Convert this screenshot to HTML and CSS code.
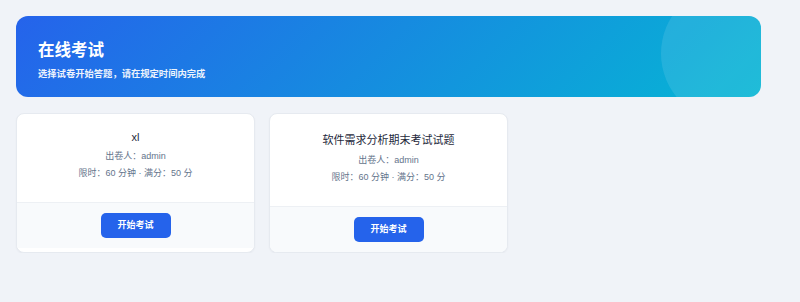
FILE: index.html
```html
<!DOCTYPE html>
<html lang="zh-CN">
<head>
    <meta charset="UTF-8">
    <meta name="viewport" content="width=device-width, initial-scale=1.0">
    <title>在线考试</title>
    <link rel="stylesheet" href="styles.css">
</head>
<body>
    <div class="wrap">
        <div class="banner">
            <h1>在线考试</h1>
            <p>选择试卷开始答题，请在规定时间内完成</p>
            <span class="circle"></span>
        </div>
        <div class="papers">
            <div class="paper">
                <div class="info">
                    <h2>xl</h2>
                    <p>出卷人：admin</p>
                    <p>限时：60 分钟 · 满分：50 分</p>
                </div>
                <div class="foot">
                    <a href="javascript:;" class="start">开始考试</a>
                </div>
            </div>
            <div class="paper">
                <div class="info">
                    <h2>软件需求分析期末考试试题</h2>
                    <p>出卷人：admin</p>
                    <p>限时：60 分钟 · 满分：50 分</p>
                </div>
                <div class="foot">
                    <a href="javascript:;" class="start">开始考试</a>
                </div>
            </div>
        </div>
    </div>
</body>
</html>
```

FILE: styles.css
```css
*{
    padding: 0;
    margin: 0;
    box-sizing: border-box;
}
body{
    background-color: #f0f3f8;
    font-family: "Liberation Sans", "Noto Sans CJK SC", sans-serif;
}
a{
    text-decoration: none;
}
.wrap{
    width: 761px;
    padding: 16px 0 0 16px;
}
.banner{
    position: relative;
    overflow: hidden;
    height: 81px;
    padding: 21px 22px 0;
    border-radius: 12px;
    background: linear-gradient(135deg, #2563eb, #06b6d4);
    color: #fff;
}
.banner h1{
    font-size: 16.5px;
    font-weight: 700;
    margin-bottom: 5px;
}
.banner p{
    font-size: 9.3px;
    font-weight: 600;
    opacity: 0.92;
}
.circle{
    position: absolute;
    right: -37px;
    top: -31px;
    width: 137px;
    height: 137px;
    border-radius: 50%;
    background-color: rgba(255, 255, 255, 0.1);
}
.papers{
    display: grid;
    grid-template-columns: repeat(3, 1fr);
    gap: 14px;
    margin-top: 16px;
}
.paper{
    background-color: #fff;
    border: 1px solid #e6eaf0;
    border-radius: 8px;
    overflow: hidden;
    box-shadow: 0 1px 2px rgba(15, 23, 42, 0.04);
}
.info{
    padding: 17px 14px 22px;
    text-align: center;
}
.info h2{
    font-size: 11px;
    font-weight: 400;
    color: #1e293b;
    margin-bottom: 7px;
}
.info p{
    font-size: 9px;
    line-height: 13px;
    color: #64748b;
    margin-bottom: 4px;
}
.info p:last-child{
    margin-bottom: 0;
}
.foot{
    border-top: 1px solid #edf0f4;
    background-color: #f8fafc;
    padding: 10px 0;
    text-align: center;
}
.start{
    display: inline-block;
    width: 70px;
    height: 25px;
    line-height: 25px;
    border-radius: 5px;
    background-color: #2563eb;
    color: #fff;
    font-size: 9px;
    font-weight: 700;
}
```
